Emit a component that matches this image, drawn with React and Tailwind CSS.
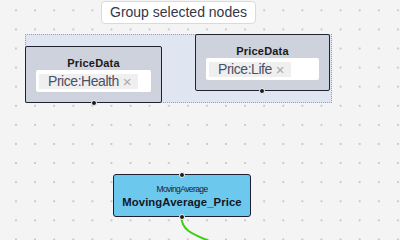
import React from "react";

function Handle({ className }) {
  return (
    <div
      className={
        "absolute w-[6px] h-[6px] rounded-full bg-[#1a1a1a] border border-[#f4f4f4] -translate-x-1/2 -translate-y-1/2 " +
        className
      }
    />
  );
}

function Chip({ text }) {
  return (
    <div className="flex items-center h-[15px] bg-[#efefef] pl-[9px] pr-[6px] gap-[4px] text-[14px] leading-[15px] tracking-[-0.45px] text-[#4b4f68]">
      <span>{text}</span>
      <span className="text-[#a8a8a8] text-[15px] leading-[15px] tracking-normal">×</span>
    </div>
  );
}

function PriceNode({ className, chip }) {
  return (
    <div
      className={
        "absolute box-border border border-[#1f2230] rounded-[2px] bg-[#cdd2dc] flex flex-col " +
        className
      }
    >
      <div className="h-[23px] pt-[10px] text-center text-[11px] leading-[13px] font-bold tracking-[0.2px] text-[#1a1a1a]">
        PriceData
      </div>
      <div className="mx-[10px] h-[22px] bg-white rounded-[2px] flex items-center px-[3px]">
        <Chip text={chip} />
      </div>
    </div>
  );
}

export default function App() {
  return (
    <div
      className="relative w-[400px] h-[240px] overflow-hidden bg-[#f4f4f4] bg-[radial-gradient(circle,#c9c9c9_0.7px,transparent_1.2px)] bg-size-[19.1px_19.1px] bg-position-[6.45px_0.75px]"
      style={{ fontFamily: '"Liberation Sans", Arial, sans-serif' }}
    >
      {/* group selection */}
      <div className="absolute left-[25px] top-[34px] w-[307px] h-[69px] bg-[#e0e6f1] border border-dotted border-[#7aa4ea]" />

      <PriceNode className="left-[25px] top-[46px] w-[137px] h-[57px]" chip="Price:Health" />
      <Handle className="left-[94px] top-[102.5px]" />

      <PriceNode className="left-[195px] top-[34px] w-[135px] h-[57px]" chip="Price:Life" />
      <Handle className="left-[262px] top-[90.5px]" />

      {/* button */}
      <div className="absolute left-[101px] top-[1px] w-[155px] h-[23px] bg-white border border-[#dadada] rounded-[4px] flex items-center justify-center text-[14px] text-[#34364a]">
        Group selected nodes
      </div>

      {/* edge */}
      <svg className="absolute left-0 top-0" width="400" height="240" viewBox="0 0 400 240">
        <path d="M181.5 217 C181.5 232, 196 235, 214 243" fill="none" stroke="#3ccf10" strokeWidth="2" />
      </svg>

      {/* moving average node */}
      <div className="absolute left-[113px] top-[174px] w-[138px] h-[43px] box-border bg-[#6dc8ee] border border-[#1c2030] rounded-[3px] flex flex-col items-center">
        <div className="mt-[9px] h-[10px] text-[8.5px] leading-[10px] tracking-[-0.6px] text-[#1a2030]">
          MovingAverage
        </div>
        <div className="mt-[1px] text-[11.3px] leading-[14px] font-bold text-[#111827] tracking-[0.1px]">
          MovingAverage_Price
        </div>
      </div>
      <Handle className="left-[181.5px] top-[174.5px]" />
      <Handle className="left-[181.5px] top-[216.5px]" />
    </div>
  );
}
